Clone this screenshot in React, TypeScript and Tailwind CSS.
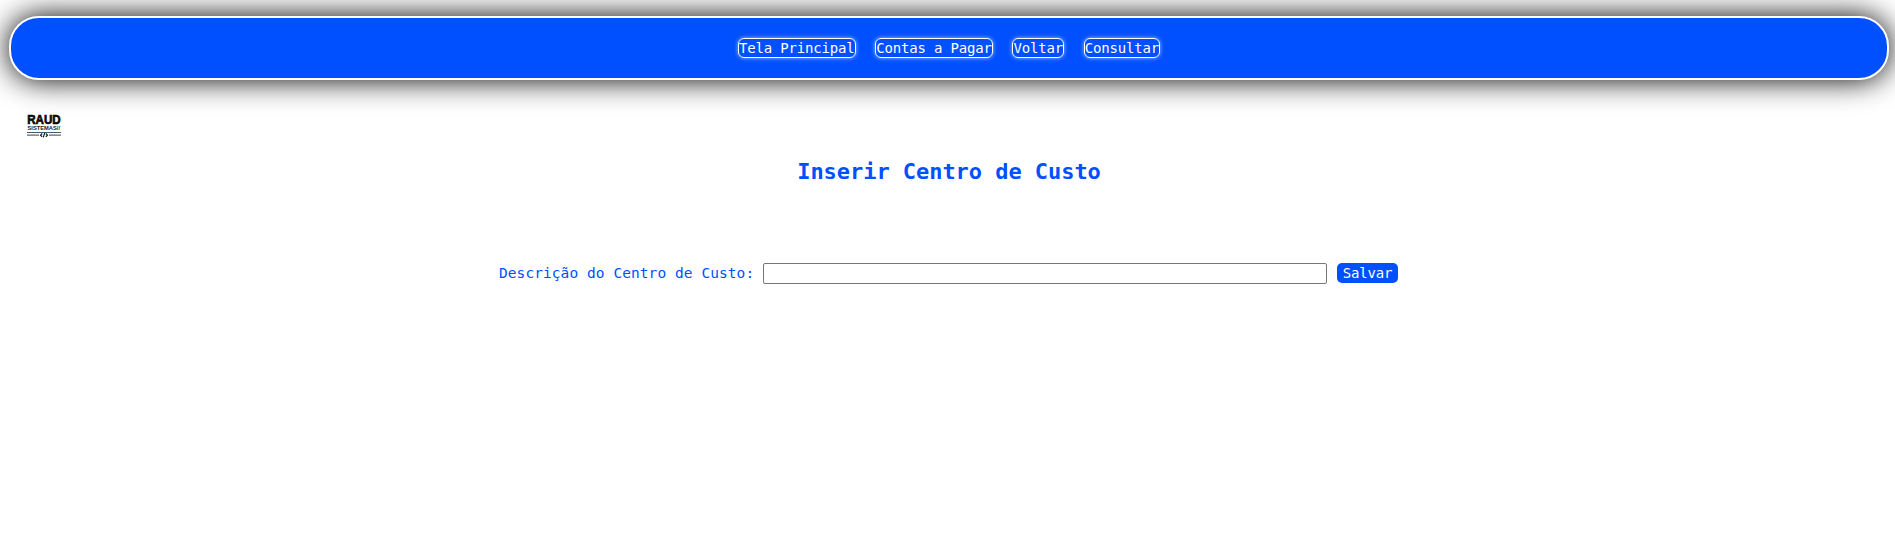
const links = ['Tela Principal', 'Contas a Pagar', 'Voltar', 'Consultar'];

function Logo() {
  return (
    <svg className="ml-[27px] mt-[34px] block h-6 w-[34px] overflow-visible" viewBox="0 0 34 24" role="img">
      <text x="0.2" y="10.2" textLength="33.4" lengthAdjust="spacingAndGlyphs" fontFamily="Liberation Sans, sans-serif" fontWeight="700" fontSize="13.4" fill="#080808" stroke="#080808" strokeWidth="0.7">RAUD</text>
      <text x="0.5" y="16.4" textLength="32.5" lengthAdjust="spacingAndGlyphs" fontFamily="Liberation Sans, sans-serif" fontWeight="700" fontSize="6" fill="#222">SISTEMAS//</text>
      <path d="M0 18.5H34" stroke="#415c73" strokeWidth="1" />
      <path d="M0 21.2H12M22 21.2H34" stroke="#666" strokeWidth="1.2" />
      <path d="M15.2 19.5L13.5 21.2L15.2 22.9M18.8 19.5L20.5 21.2L18.8 22.9M17.7 19L16.3 23.4" fill="none" stroke="#111" strokeWidth="1.1" />
    </svg>
  );
}

export default function App() {
  return (
    <div className="flex h-[547px] flex-col overflow-hidden bg-white font-['DejaVu_Sans_Mono',monospace] text-[#0050ff]">
      <header className="ml-[9px] mr-1.5 mt-4 h-16 shrink-0 rounded-[30px] border-2 border-white bg-[#0050ff] shadow-[0_0_30px_#000]">
        <nav className="flex justify-center gap-[19.7px] pt-5">
          {links.map((label) => (
            <a key={label} href="#" className="h-5 whitespace-nowrap rounded-md border border-white text-[14px] leading-[19px] tracking-[-0.18px] text-white shadow-[0_0_4px_#ffffffa0]">
              {label}
            </a>
          ))}
        </nav>
      </header>
      <Logo />
      <h1 className="mt-5 pl-[3px] text-center text-[22px] font-bold leading-7 tracking-[-0.045px]">Inserir Centro de Custo</h1>
      <form className="ml-[499px] mt-[77px] flex items-start text-[14.5px] leading-5 tracking-[0.07px]" onSubmit={(e) => e.preventDefault()}>
        <label htmlFor="descricao" className="w-[264px] whitespace-nowrap">Descrição do Centro de Custo:</label>
        <input id="descricao" className="h-[21px] w-[564px] rounded-xs border border-[#767676] bg-white px-1" />
        <button className="ml-2.5 h-5 w-[61px] rounded-[5px] bg-[#0050ff] text-center text-[14px] leading-5 tracking-[-0.18px] text-white">Salvar</button>
      </form>
    </div>
  );
}
